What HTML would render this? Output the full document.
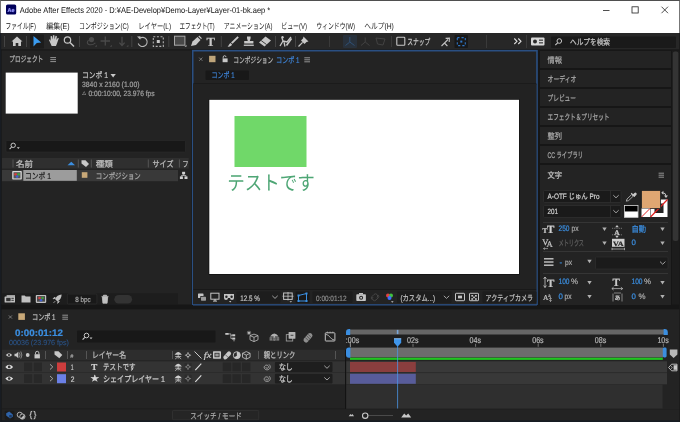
<!DOCTYPE html>
<html lang="ja"><head><meta charset="utf-8"><title>Adobe After Effects 2020</title>
<style>
html,body{margin:0;padding:0;background:#161616;overflow:hidden}
svg{display:block;will-change:transform;font-family:"Liberation Sans", "Noto Sans CJK JP", sans-serif;}
text{white-space:pre}
</style></head><body>
<svg width="680" height="422" viewBox="0 0 680 422" text-rendering="geometricPrecision">
<rect x="0" y="0" width="680" height="422" fill="#161616" />
<rect x="0" y="0" width="680" height="33" fill="#ffffff" />
<rect x="0" y="0" width="680" height="0.9" fill="#3c3c3c" />
<rect x="0" y="0" width="0.9" height="33" fill="#666" />
<rect x="679.2" y="0" width="0.8" height="33" fill="#555" />
<rect x="6" y="4.5" width="10.2" height="10" fill="#00005b" rx="1.6"/>
<text x="7.6" y="12.2" font-size="5.6" fill="#9a9aff" textLength="7" lengthAdjust="spacingAndGlyphs" font-weight="bold" stroke="#9a9aff" stroke-width="0.22" >Ae</text>
<text x="19.8" y="13" font-size="8.4" fill="#111" textLength="250.5" lengthAdjust="spacingAndGlyphs" >Adobe After Effects 2020 - D:¥AE-Develop¥Demo-Layer¥Layer-01-bk.aep *</text>
<line x1="603" y1="10.5" x2="609.5" y2="10.5" stroke="#222" stroke-width="0.8" />
<rect x="632" y="6.8" width="6.2" height="6.2" fill="none" stroke="#222" stroke-width="0.8"/>
<path d="M661.5 6.7 L668 13.2 M668 6.7 L661.5 13.2" fill="none" stroke="#222" stroke-width="0.8" />
<text x="5.5" y="29" font-size="8.2" fill="#151515" textLength="30.3" lengthAdjust="spacingAndGlyphs" >ファイル(F)</text>
<text x="46.2" y="29" font-size="8.2" fill="#151515" textLength="23.3" lengthAdjust="spacingAndGlyphs" >編集(E)</text>
<text x="79" y="29" font-size="8.2" fill="#151515" textLength="49.8" lengthAdjust="spacingAndGlyphs" >コンポジション(C)</text>
<text x="138.2" y="29" font-size="8.2" fill="#151515" textLength="32.8" lengthAdjust="spacingAndGlyphs" >レイヤー(L)</text>
<text x="179.5" y="29" font-size="8.2" fill="#151515" textLength="35.0" lengthAdjust="spacingAndGlyphs" >エフェクト(T)</text>
<text x="223.8" y="29" font-size="8.2" fill="#151515" textLength="48.7" lengthAdjust="spacingAndGlyphs" >アニメーション(A)</text>
<text x="281.2" y="29" font-size="8.2" fill="#151515" textLength="25.8" lengthAdjust="spacingAndGlyphs" >ビュー(V)</text>
<text x="316.2" y="29" font-size="8.2" fill="#151515" textLength="38.8" lengthAdjust="spacingAndGlyphs" >ウィンドウ(W)</text>
<text x="364.2" y="29" font-size="8.2" fill="#151515" textLength="29.6" lengthAdjust="spacingAndGlyphs" >ヘルプ(H)</text>
<rect x="0" y="33" width="680" height="16.5" fill="#272727" />
<rect x="0" y="49.5" width="680" height="1" fill="#1a1a1a" />
<line x1="4.5" y1="36" x2="4.5" y2="47" stroke="#444" stroke-width="1" />
<path d="M11.5 41.5 L17 36.5 L22.5 41.5 L21 41.5 L21 46 L18.3 46 L18.3 43 L15.7 43 L15.7 46 L13 46 L13 41.5 Z" fill="#c8c8c8" />
<line x1="26.5" y1="36" x2="26.5" y2="47" stroke="#444" stroke-width="1" />
<rect x="30" y="34.5" width="14" height="14" fill="#1c1c1c" rx="1"/>
<path d="M33.5 36 L41.2 42.6 L36.8 43 L33.5 46.5 Z" fill="#3b9cf0" />
<g transform="translate(53.5,41.5) scale(1.08) translate(-53.7,-42.3)">
<path d="M49.5 41 L50.5 40.2 L51.2 42 L51 37.5 L52.2 37.3 L52.8 40.5 L53.2 36.5 L54.5 36.5 L54.7 40.5 L55.6 37 L56.8 37.3 L56.4 41 L57.8 38.8 L58.6 39.4 L57 44 L56 46.5 L52 46.5 Z" fill="#c8c8c8" />
</g>
<circle cx="67.5" cy="40" r="3.2" fill="none" stroke="#c8c8c8" stroke-width="1.2"/>
<line x1="70" y1="42.5" x2="74" y2="46.5" stroke="#c8c8c8" stroke-width="1.5" />
<line x1="79.5" y1="36" x2="79.5" y2="47" stroke="#444" stroke-width="1" />
<circle cx="91.5" cy="39.6" r="2.6" fill="#4a4a4a"/>
<path d="M88.6 40.2 a4.4 2.6 -20 1 0 6.8 2.6" fill="none" stroke="#4a4a4a" stroke-width="1.1" />
<path d="M96.8 46.8 h-2 l2 -2 Z" fill="#4a4a4a" />
<path d="M105.3 36.6 V45.4 M100.6 41 H110" fill="none" stroke="#4a4a4a" stroke-width="1.3" />
<path d="M111.8 46.8 h-2 l2 -2 Z" fill="#4a4a4a" />
<path d="M122 36.8 V44.6 M119.4 42.6 L122 45.6 L124.6 42.6" fill="none" stroke="#4a4a4a" stroke-width="1.3" />
<path d="M128.4 46.8 h-2 l2 -2 Z" fill="#4a4a4a" />
<line x1="131.8" y1="36" x2="131.8" y2="47" stroke="#444" stroke-width="1" />
<path d="M139.5 38.5 A4.6 4.6 0 1 1 138.2 43.5" fill="none" stroke="#b8b8b8" stroke-width="1.05" />
<path d="M137 36.4 L140.5 36.2 L140.3 39.8 Z" fill="#b8b8b8" />
<rect x="153.3" y="36.8" width="10" height="9.6" fill="none" stroke="#b0b0b0" stroke-width="1.1" stroke-dasharray="2 1.6"/>
<rect x="156.8" y="40" width="3" height="3" fill="#c8c8c8" />
<line x1="168.8" y1="36" x2="168.8" y2="47" stroke="#444" stroke-width="1" />
<rect x="174.5" y="36.2" width="10.4" height="9" fill="#484848" stroke="#a8a8a8" stroke-width="1"/>
<path d="M186.5 46.8 h-2 l2 -2 Z" fill="#b0b0b0" />
<path d="M191 46 L192.5 41.5 L197.5 37 L200.5 40 L196 45 Z" fill="#c8c8c8" />
<path d="M198.8 36 L201.5 38.7" fill="none" stroke="#c8c8c8" stroke-width="1.2" />
<text x="206.6" y="45.8" font-size="12.6" fill="#c8c8c8" font-weight="bold" stroke="#c8c8c8" stroke-width="0.22" font-family="Liberation Serif, serif">T</text>
<line x1="221.3" y1="36" x2="221.3" y2="47" stroke="#444" stroke-width="1" />
<path d="M237.5 36.2 L238.8 37.4 L232.5 43.8 L231 42.5 Z" fill="#c8c8c8" />
<path d="M227.5 46.5 C229 46 229 43.5 230.6 43 L232 44.4 C231.5 46 229.5 47 227.5 46.5 Z" fill="#c8c8c8" />
<path d="M247 36.5 h3.6 v1.8 l-0.8 2.8 h3.6 v2.4 h-9.2 v-2.4 h3.6 l-0.8 -2.8 Z" fill="#c8c8c8" />
<rect x="243.8" y="44.6" width="10" height="1.3" fill="#c8c8c8" />
<path d="M259 42.5 L265.5 36.5 L271 40.5 L264.5 46.5 Z" fill="#c8c8c8" />
<path d="M261.2 40.6 L266.6 44.6" fill="none" stroke="#2b2b2b" stroke-width="0.9" />
<line x1="275.5" y1="36" x2="275.5" y2="47" stroke="#444" stroke-width="1" />
<path d="M280 46 L283 41 L282 38 M283 41 L287 42 L291 37 M285 46.5 L284 42" fill="none" stroke="#c8c8c8" stroke-width="1.3" />
<circle cx="282.5" cy="37.3" r="1.2" fill="#c8c8c8"/>
<path d="M286.5 45.5 L291.5 38.5" fill="none" stroke="#c8c8c8" stroke-width="1.6" />
<line x1="295.5" y1="36" x2="295.5" y2="47" stroke="#444" stroke-width="1" />
<path d="M303.5 36.5 L308.5 41.5 L306.5 42 L304.5 44 L301 40.5 L303 38.5 Z" fill="#c8c8c8" />
<path d="M302.6 42.4 L298.5 46.5" fill="none" stroke="#c8c8c8" stroke-width="1.2" />
<line x1="329.5" y1="36" x2="329.5" y2="47" stroke="#3a3a3a" stroke-width="1" />
<rect x="343" y="35" width="14" height="13" fill="#28313c" rx="1"/>
<path d="M349.8 37 V42 L345.5 45.5 M349.8 42 L354.5 45.5" fill="none" stroke="#2f5074" stroke-width="1" />
<path d="M365.2 37.5 V42 L361 45.5 M365.2 42 L369.5 45.5" fill="none" stroke="#424242" stroke-width="1" />
<path d="M376 38 L385 39 L383 45 L377.5 44 Z" fill="none" stroke="#424242" stroke-width="1" />
<line x1="391.5" y1="36" x2="391.5" y2="47" stroke="#3a3a3a" stroke-width="1" />
<rect x="396.8" y="37.3" width="8" height="8" fill="none" stroke="#c8c8c8" stroke-width="1.1" rx="0.8"/>
<text x="407.3" y="45.1" font-size="8.6" fill="#c8c8c8" textLength="23" lengthAdjust="spacingAndGlyphs" stroke="#c8c8c8" stroke-width="0.22" >スナップ</text>
<path d="M441.5 46 L448 39.5 M445.6 38.4 L449.4 38.2 L449.2 42 M444.4 43 L447.4 46" fill="none" stroke="#c0c0c0" stroke-width="1.1" />
<rect x="454.5" y="35" width="13.5" height="13" fill="#181818" rx="1"/>
<rect x="457.3" y="37.6" width="8" height="8" fill="none" stroke="#2e74c4" stroke-width="1.1" stroke-dasharray="2.2 2"/>
<rect x="460.3" y="40.6" width="2" height="2" fill="#2e74c4" />
<line x1="486.5" y1="35" x2="486.5" y2="48" stroke="#3a3a3a" stroke-width="1" />
<path d="M514.3 38.5 L517 41.3 L514.3 44 M518.3 38.5 L521 41.3 L518.3 44" fill="none" stroke="#ddd" stroke-width="1.1" />
<line x1="526.5" y1="35" x2="526.5" y2="48" stroke="#3a3a3a" stroke-width="1" />
<rect x="531" y="37.5" width="13.5" height="8" fill="#d8d8d8" rx="1"/>
<circle cx="535" cy="41.5" r="2" fill="#2b2b2b"/>
<rect x="539" y="39.6" width="4" height="1.1" fill="#2b2b2b" />
<rect x="539" y="42.3" width="4" height="1.1" fill="#2b2b2b" />
<rect x="551" y="36.5" width="125" height="11.5" fill="#1a1a1a" rx="1"/>
<circle cx="559.3" cy="41" r="2.3" fill="none" stroke="#c8c8c8" stroke-width="1"/>
<line x1="557.6" y1="42.8" x2="555.3" y2="45.2" stroke="#c8c8c8" stroke-width="1.1" />
<text x="570" y="45.1" font-size="8.4" fill="#c4c4c4" textLength="40" lengthAdjust="spacingAndGlyphs" stroke="#c4c4c4" stroke-width="0.22" >ヘルプを検索</text>
<rect x="1.5" y="50.5" width="189.8" height="254" fill="#232323" />
<text x="9.3" y="62.0" font-size="8.2" fill="#b8b8b8" textLength="34" lengthAdjust="spacingAndGlyphs" stroke="#b8b8b8" stroke-width="0.22" >プロジェクト</text>
<line x1="50.3" y1="57.6" x2="56" y2="57.6" stroke="#b0b0b0" stroke-width="0.8" />
<line x1="50.3" y1="59.6" x2="56" y2="59.6" stroke="#b0b0b0" stroke-width="0.8" />
<line x1="50.3" y1="61.6" x2="56" y2="61.6" stroke="#b0b0b0" stroke-width="0.8" />
<rect x="5.7" y="72.6" width="72" height="41" fill="#ffffff" />
<text x="82" y="78.0" font-size="8.2" fill="#c8c8c8" textLength="26" lengthAdjust="spacingAndGlyphs" stroke="#c8c8c8" stroke-width="0.22" >コンポ 1</text>
<path d="M110.5 74 L115.8 74 L113.15 77.4 Z" fill="#c8c8c8" />
<text x="82" y="87.1" font-size="7.7" fill="#a0a0a0" textLength="57.5" lengthAdjust="spacingAndGlyphs" stroke="#a0a0a0" stroke-width="0.22" >3840 x 2160 (1.00)</text>
<text x="82.2" y="95.2" font-size="4.4" fill="#a0a0a0" textLength="3.8" lengthAdjust="spacingAndGlyphs" stroke="#a0a0a0" stroke-width="0.22" >△</text>
<text x="88.4" y="96.1" font-size="7.7" fill="#a0a0a0" textLength="66.2" lengthAdjust="spacingAndGlyphs" stroke="#a0a0a0" stroke-width="0.22" >0:00:10:00, 23.976 fps</text>
<rect x="6" y="140.5" width="179.5" height="11.5" fill="#181818" rx="1" stroke="#2c2c2c" stroke-width="0.6"/>
<circle cx="13.2" cy="145.3" r="2.2" fill="none" stroke="#c8c8c8" stroke-width="1"/>
<line x1="11.6" y1="147" x2="9.6" y2="149.2" stroke="#c8c8c8" stroke-width="1.1" />
<path d="M16.8 147.2 L19.8 147.2 L18.3 149 Z" fill="#c8c8c8" />
<rect x="2" y="158" width="186.8" height="10.6" fill="#2f2f2f" />
<line x1="13" y1="159.5" x2="13" y2="167.5" stroke="#555" stroke-width="1" />
<line x1="78.3" y1="159.5" x2="78.3" y2="167.5" stroke="#555" stroke-width="1" />
<line x1="91.3" y1="159.5" x2="91.3" y2="167.5" stroke="#555" stroke-width="1" />
<line x1="148.3" y1="159.5" x2="148.3" y2="167.5" stroke="#555" stroke-width="1" />
<line x1="179.4" y1="159.5" x2="179.4" y2="167.5" stroke="#555" stroke-width="1" />
<text x="16" y="167.1" font-size="8.4" fill="#c0c0c0" textLength="17" lengthAdjust="spacingAndGlyphs" stroke="#c0c0c0" stroke-width="0.22" >名前</text>
<path d="M67.5 165.3 L71.3 161.8 L75 165.3 Z" fill="#3b8ee0" />
<path d="M81.5 160.3 L85.5 160.3 L89 164 L86 167 L81.5 163.5 Z" fill="#c8c8c8" />
<text x="95.8" y="167.1" font-size="8.4" fill="#c0c0c0" textLength="17" lengthAdjust="spacingAndGlyphs" stroke="#c0c0c0" stroke-width="0.22" >種類</text>
<text x="152.5" y="167.1" font-size="8.4" fill="#c0c0c0" textLength="21" lengthAdjust="spacingAndGlyphs" stroke="#c0c0c0" stroke-width="0.22" >サイズ</text>
<text x="182.6" y="167.1" font-size="8.4" fill="#c0c0c0" textLength="6" lengthAdjust="spacingAndGlyphs" stroke="#c0c0c0" stroke-width="0.22" >フ</text>
<rect x="2" y="170" width="176" height="11.2" fill="#393939" />
<rect x="12.2" y="171" width="9.6" height="8.6" fill="#d8d8d8" rx="0.8"/>
<rect x="13.5" y="172.2" width="7" height="6.2" fill="#555" />
<circle cx="15.6" cy="174.3" r="1.4" fill="#d04040"/><circle cx="18.6" cy="174.3" r="1.4" fill="#40a040"/><circle cx="17.1" cy="176.6" r="1.4" fill="#4060d0"/>
<rect x="23.3" y="170" width="53.5" height="10.8" fill="#9c9c9c" />
<text x="25" y="178.7" font-size="8.4" fill="#202020" textLength="26" lengthAdjust="spacingAndGlyphs" stroke="#202020" stroke-width="0.22" >コンポ 1</text>
<rect x="81.8" y="172.2" width="5.6" height="5.6" fill="#c8a878" />
<text x="95.8" y="178.5" font-size="8.2" fill="#a8a8a8" textLength="45" lengthAdjust="spacingAndGlyphs" stroke="#a8a8a8" stroke-width="0.22" >コンポジション</text>
<g transform="translate(1.3,0.2)">
<rect x="180.8" y="171.6" width="3" height="2.6" fill="#d0d0d0" />
<rect x="178.6" y="176.2" width="3" height="2.6" fill="#d0d0d0" />
<rect x="183.2" y="176.2" width="3" height="2.6" fill="#d0d0d0" />
<path d="M182.3 174 V175.4 M180.1 176.3 V175.3 H184.7 V176.3" fill="none" stroke="#d0d0d0" stroke-width="0.7" />
</g>
<rect x="2" y="293.3" width="176" height="11" fill="#1d1d1d" />
<g transform="translate(0,1.4)">
<rect x="4.6" y="295" width="10.4" height="6.2" fill="#c0c0c0" rx="0.6"/>
<rect x="6.6" y="293.8" width="8.4" height="1.6" fill="#c0c0c0" />
<rect x="6.2" y="296.4" width="4.4" height="3.4" fill="#333" />
<rect x="11.4" y="296.4" width="2.4" height="1" fill="#333" />
<rect x="11.4" y="298.4" width="2.4" height="1" fill="#333" />
<path d="M21.5 294 h3.2 l1 1 h4.8 v6 h-9 Z" fill="#c0c0c0" />
<rect x="35.8" y="293.5" width="10.4" height="8" fill="#c0c0c0" rx="0.8"/>
<rect x="37" y="294.7" width="8" height="5.6" fill="#4a4a4a" />
<circle cx="39.5" cy="296.6" r="1.3" fill="#d04040"/><circle cx="42.5" cy="296.6" r="1.3" fill="#40a040"/><circle cx="41" cy="298.8" r="1.3" fill="#4060d0"/>
<path d="M61.6 293.2 C58.4 293.4 56.4 295 55 297.6 L57.4 300 C60 298.6 61.6 296.6 61.6 293.2 Z" fill="#c0c0c0" />
<path d="M55.2 297 L53 297.4 L54.8 295.6 Z M58 299.8 L57.6 302 L59.4 300.2 Z M55.4 299.6 L53.4 301.6" fill="#c0c0c0" stroke="#c0c0c0" stroke-width="0.7" />
<rect x="67.3" y="292.6" width="29.6" height="10" fill="#191919" rx="1" stroke="#2e2e2e" stroke-width="0.7"/>
<text x="75.3" y="300.8" font-size="7.4" fill="#a8a8a8" textLength="15.5" lengthAdjust="spacingAndGlyphs" stroke="#a8a8a8" stroke-width="0.22" >8 bpc</text>
<path d="M101.5 295 h7 M103.5 295 v-1.2 h3 v1.2 M102.3 295.6 l0.6 6.2 h4.2 l0.6 -6.2 Z" fill="#c0c0c0" stroke="#c0c0c0" stroke-width="0.8" />
<rect x="114.3" y="293.6" width="17.8" height="8.6" fill="#333333" rx="4.3"/>
</g>
<rect x="192.7" y="50.7" width="344.3" height="254" fill="#232323" stroke="#2a4f82" stroke-width="1.6"/>
<path d="M199.2 57.6 L202.4 60.8 M202.4 57.6 L199.2 60.8" fill="none" stroke="#8a8a8a" stroke-width="0.8" />
<rect x="209.1" y="55.8" width="6.4" height="6.4" fill="#bfa57a" />
<rect x="222.6" y="58.4" width="5" height="3.8" fill="#c8c8c8" />
<path d="M223.2 58.4 v-1.3 a1.4 1.4 0 0 1 2.8 0" fill="none" stroke="#c8c8c8" stroke-width="0.9" />
<text x="233.3" y="62.7" font-size="8.2" fill="#b8b8b8" textLength="40" lengthAdjust="spacingAndGlyphs" stroke="#b8b8b8" stroke-width="0.22" >コンポジション</text>
<text x="276" y="62.7" font-size="8.2" fill="#3d80d2" textLength="23.5" lengthAdjust="spacingAndGlyphs" stroke="#3d80d2" stroke-width="0.22" >コンポ 1</text>
<line x1="304.3" y1="57.8" x2="310" y2="57.8" stroke="#b0b0b0" stroke-width="0.8" />
<line x1="304.3" y1="59.8" x2="310" y2="59.8" stroke="#b0b0b0" stroke-width="0.8" />
<line x1="304.3" y1="61.8" x2="310" y2="61.8" stroke="#b0b0b0" stroke-width="0.8" />
<rect x="205.5" y="70.5" width="43.5" height="9.6" fill="#181818" rx="1"/>
<text x="211.6" y="78.1" font-size="8.2" fill="#3d80d2" textLength="23" lengthAdjust="spacingAndGlyphs" stroke="#3d80d2" stroke-width="0.22" >コンポ 1</text>
<rect x="193" y="83.5" width="343.5" height="1" fill="#141414" />
<rect x="193" y="84" width="343.5" height="205" fill="#222222" />
<rect x="208.6" y="99.2" width="311" height="175.5" fill="#111111" />
<rect x="209.3" y="99.8" width="309.7" height="174.2" fill="#ffffff" />
<rect x="234.5" y="116" width="72" height="51" fill="#70d869" />
<text x="227.3" y="190.3" font-size="20" fill="#4ea675" textLength="87.5" lengthAdjust="spacingAndGlyphs" font-weight="400" >テストです</text>
<rect x="193" y="289" width="343.5" height="0.8" fill="#141414" />
<rect x="193" y="289.8" width="343.5" height="14.5" fill="#232323" />
<rect x="198" y="293.5" width="5.5" height="4.5" fill="#c4c4c4" rx="0.6"/>
<rect x="200.3" y="296" width="6" height="4.8" fill="#232323" rx="0.6"/>
<rect x="201" y="296.7" width="5" height="4" fill="#9a9a9a" rx="0.6"/>
<rect x="210.8" y="293.2" width="8.2" height="6" fill="none" stroke="#c4c4c4" stroke-width="1"/>
<rect x="213" y="300.6" width="4" height="1" fill="#c4c4c4" />
<rect x="214.4" y="299" width="1.2" height="2" fill="#c4c4c4" />
<path d="M224 294 h10 v4 a2 2 0 0 1 -4 0 h-2 a2 2 0 0 1 -4 0 Z" fill="#c4c4c4" />
<circle cx="226.4" cy="296.8" r="1.2" fill="#232323"/><circle cx="231.6" cy="296.8" r="1.2" fill="#232323"/>
<path d="M229 301 h2.4 l-1.2 1.4 Z" fill="#c4c4c4" />
<rect x="236.5" y="291.5" width="44" height="11.5" fill="#1d1d1d" rx="1"/>
<text x="240.3" y="300.7" font-size="7.9" fill="#c0c0c0" textLength="19.5" lengthAdjust="spacingAndGlyphs" stroke="#c0c0c0" stroke-width="0.22" >12.5 %</text>
<path d="M272.3 295.8 L275 298.4 L277.7 295.8" fill="none" stroke="#b0b0b0" stroke-width="0.9" />
<rect x="283.6" y="293" width="8.6" height="6.4" fill="none" stroke="#c4c4c4" stroke-width="1"/>
<path d="M288 292 v8.4 M282.5 296.2 h11" fill="none" stroke="#c4c4c4" stroke-width="0.8" />
<path d="M289.5 301.2 h2.6 l-1.3 1.4 Z" fill="#c4c4c4" />
<rect x="295.5" y="291.5" width="14" height="11.5" fill="#181818" rx="1"/>
<path d="M298.5 301 V295.5 L306.5 293.5 V301 Z" fill="none" stroke="#3b8ee0" stroke-width="1" />
<rect x="297.5" y="300" width="2" height="2" fill="#3b8ee0" />
<rect x="305.5" y="300" width="2" height="2" fill="#3b8ee0" />
<rect x="305.5" y="292.5" width="2" height="2" fill="#3b8ee0" />
<rect x="297.5" y="294.5" width="2" height="2" fill="#3b8ee0" />
<rect x="312.5" y="291.5" width="40" height="11.5" fill="#1d1d1d" rx="1"/>
<text x="316" y="300.7" font-size="7.7" fill="#8a8a8a" textLength="30.5" lengthAdjust="spacingAndGlyphs" stroke="#8a8a8a" stroke-width="0.22" >0:00:01:12</text>
<rect x="356.3" y="294.3" width="9.6" height="6.8" fill="#c4c4c4" rx="0.8"/>
<rect x="359" y="293" width="4" height="1.6" fill="#c4c4c4" />
<circle cx="361.1" cy="297.8" r="2" fill="#232323"/><circle cx="361.1" cy="297.8" r="1" fill="#c4c4c4"/>
<path d="M372 299.5 a2 2 0 0 1 0 -3 l2 -2 a2 2 0 0 1 3 3 M378 295 a2 2 0 0 1 0 3 l-2 2 a2 2 0 0 1 -3 -3" fill="none" stroke="#444" stroke-width="1" />
<circle cx="388" cy="295.4" r="2" fill="#e04040"/><circle cx="391" cy="295.4" r="2" fill="#40c040"/><circle cx="389.5" cy="298" r="2" fill="#4070ff"/>
<path d="M391 301.3 h2.6 l-1.3 1.4 Z" fill="#c4c4c4" />
<rect x="397" y="291.5" width="54.5" height="11.5" fill="#1d1d1d" rx="1"/>
<text x="400.5" y="300.7" font-size="8.2" fill="#c0c0c0" textLength="34.5" lengthAdjust="spacingAndGlyphs" stroke="#c0c0c0" stroke-width="0.22" >(カスタム...)</text>
<path d="M443.8 295.8 L446.5 298.4 L449.2 295.8" fill="none" stroke="#b0b0b0" stroke-width="0.9" />
<rect x="455.5" y="293.3" width="9" height="7.4" fill="none" stroke="#c4c4c4" stroke-width="1" rx="0.6"/>
<rect x="458" y="295.6" width="4" height="2.8" fill="#c4c4c4" />
<rect x="469.5" y="293.3" width="9" height="7.4" fill="none" stroke="#c4c4c4" stroke-width="1" rx="0.6"/>
<rect x="471.3" y="295" width="1.8" height="1.6" fill="#c4c4c4" />
<rect x="475" y="295" width="1.8" height="1.6" fill="#c4c4c4" />
<rect x="473.1" y="296.6" width="1.8" height="1.6" fill="#c4c4c4" />
<rect x="471.3" y="298.2" width="1.8" height="1.6" fill="#c4c4c4" />
<rect x="475" y="298.2" width="1.8" height="1.6" fill="#c4c4c4" />
<rect x="482.5" y="291.5" width="54" height="11.5" fill="#1d1d1d" rx="1"/>
<text x="485.5" y="300.7" font-size="8.2" fill="#c0c0c0" textLength="47.5" lengthAdjust="spacingAndGlyphs" stroke="#c0c0c0" stroke-width="0.22" >アクティブカメラ</text>
<rect x="538" y="50.5" width="142" height="254" fill="#161616" />
<rect x="540" y="51" width="131" height="17" fill="#232323" />
<text x="547.5" y="63.1" font-size="8.2" fill="#a8a8a8" textLength="14.5" lengthAdjust="spacingAndGlyphs" stroke="#a8a8a8" stroke-width="0.22" >情報</text>
<rect x="540" y="70" width="131" height="17" fill="#232323" />
<text x="547.5" y="82.1" font-size="8.2" fill="#a8a8a8" textLength="29" lengthAdjust="spacingAndGlyphs" stroke="#a8a8a8" stroke-width="0.22" >オーディオ</text>
<rect x="540" y="89" width="131" height="17" fill="#232323" />
<text x="547.5" y="101.1" font-size="8.2" fill="#a8a8a8" textLength="28.5" lengthAdjust="spacingAndGlyphs" stroke="#a8a8a8" stroke-width="0.22" >プレビュー</text>
<rect x="540" y="108" width="131" height="17" fill="#232323" />
<text x="547.5" y="120.1" font-size="8.2" fill="#a8a8a8" textLength="62" lengthAdjust="spacingAndGlyphs" stroke="#a8a8a8" stroke-width="0.22" >エフェクト＆プリセット</text>
<rect x="540" y="127" width="131" height="17" fill="#232323" />
<text x="547.5" y="139.1" font-size="8.2" fill="#a8a8a8" textLength="14.5" lengthAdjust="spacingAndGlyphs" stroke="#a8a8a8" stroke-width="0.22" >整列</text>
<rect x="540" y="146" width="131" height="17" fill="#232323" />
<text x="547.5" y="158.1" font-size="8.2" fill="#a8a8a8" textLength="35.5" lengthAdjust="spacingAndGlyphs" stroke="#a8a8a8" stroke-width="0.22" >CC ライブラリ</text>
<rect x="540" y="165" width="131" height="140" fill="#232323" />
<text x="547.5" y="178.1" font-size="8.2" fill="#c0c0c0" textLength="14.5" lengthAdjust="spacingAndGlyphs" stroke="#c0c0c0" stroke-width="0.22" >文字</text>
<line x1="658.6" y1="173.2" x2="664" y2="173.2" stroke="#b0b0b0" stroke-width="0.8" />
<line x1="658.6" y1="175.2" x2="664" y2="175.2" stroke="#b0b0b0" stroke-width="0.8" />
<line x1="658.6" y1="177.2" x2="664" y2="177.2" stroke="#b0b0b0" stroke-width="0.8" />
<rect x="672" y="50.5" width="8" height="254" fill="#1c1c1c" />
<rect x="672.8" y="51.5" width="5.6" height="189.5" fill="#343434" rx="2"/>
<rect x="543.5" y="190.5" width="77.5" height="12" fill="#1a1a1a" stroke="#2f2f2f" stroke-width="0.8" rx="1"/>
<line x1="610.5" y1="190.5" x2="610.5" y2="202.5" stroke="#303030" stroke-width="0.8" />
<text x="547.5" y="198.7" font-size="7.9" fill="#d0d0d0" textLength="52" lengthAdjust="spacingAndGlyphs" stroke="#d0d0d0" stroke-width="0.22" >A-OTF じゅん Pro</text>
<path d="M613.3 195.2 L616 197.8 L618.7 195.2" fill="none" stroke="#b0b0b0" stroke-width="0.9" />
<rect x="543.5" y="205.5" width="77.5" height="12" fill="#1a1a1a" stroke="#2f2f2f" stroke-width="0.8" rx="1"/>
<line x1="610.5" y1="205.5" x2="610.5" y2="217.5" stroke="#303030" stroke-width="0.8" />
<text x="547.5" y="213.8" font-size="7.7" fill="#d0d0d0" textLength="10.5" lengthAdjust="spacingAndGlyphs" stroke="#d0d0d0" stroke-width="0.22" >201</text>
<path d="M613.3 210.2 L616 212.8 L618.7 210.2" fill="none" stroke="#b0b0b0" stroke-width="0.9" />
<path d="M626.3 201.2 L627 199 L631.6 194.6 L633.2 196.2 L628.6 200.6 Z" fill="none" stroke="#c0c0c0" stroke-width="0.8" />
<path d="M631.2 193.2 L634.6 196.6" fill="none" stroke="#c8c8c8" stroke-width="1.2" />
<path d="M632.6 194.8 L634.4 193 a1.3 1.3 0 0 1 1.9 1.9 L634.5 196.7 Z" fill="#c8c8c8" />
<rect x="650.5" y="199.5" width="17" height="17.5" fill="#ffffff" />
<rect x="654.5" y="203.5" width="9" height="9.5" fill="#232323" />
<path d="M650.5 217 L667.5 199.5" fill="none" stroke="#e02020" stroke-width="1.2" />
<rect x="641.5" y="190.5" width="19" height="18" fill="#dfa672" stroke="#232323" stroke-width="0.8"/>
<path d="M662.6 192.8 a3.4 3.4 0 0 1 3.4 3.4" fill="none" stroke="#c8c8c8" stroke-width="1" />
<path d="M663.4 190.8 L661.2 192.8 L663.4 194.8 Z M664 195.6 L668 195.6 L666 198 Z" fill="#c8c8c8" />
<rect x="624.5" y="205.5" width="13.5" height="6" fill="#000000" />
<rect x="624.5" y="211.5" width="13.5" height="5.8" fill="#ffffff" />
<rect x="624.5" y="205.5" width="13.5" height="11.8" fill="none" stroke="#d8d8d8" stroke-width="0.8"/>
<rect x="641.5" y="208.5" width="8.5" height="8.5" fill="#ffffff" />
<path d="M641.5 217 L650 208.5" fill="none" stroke="#e02020" stroke-width="1" />
<line x1="543" y1="222.5" x2="668" y2="222.5" stroke="#3a3a3a" stroke-width="0.8" />
<line x1="543" y1="251.5" x2="668" y2="251.5" stroke="#3a3a3a" stroke-width="0.8" />
<line x1="543" y1="273.5" x2="668" y2="273.5" stroke="#3a3a3a" stroke-width="0.8" />
<text x="542.6" y="233.4" font-size="7.4" fill="#d0d0d0" font-weight="bold" stroke="#d0d0d0" stroke-width="0.22" font-family="Liberation Serif, serif">T</text>
<text x="547" y="233.4" font-size="11" fill="#d0d0d0" font-weight="bold" stroke="#d0d0d0" stroke-width="0.22" font-family="Liberation Serif, serif">T</text>
<text x="558.5" y="231.3" font-size="7.9" fill="#3b8ee0" textLength="11" lengthAdjust="spacingAndGlyphs" stroke="#3b8ee0" stroke-width="0.22" >250</text>
<text x="571.5" y="231.3" font-size="7.9" fill="#a8a8a8" textLength="7" lengthAdjust="spacingAndGlyphs" stroke="#a8a8a8" stroke-width="0.22" >px</text>
<path d="M602.3 227.4 L606.7 227.4 L604.5 230.9 Z" fill="#b0b0b0" />
<path d="M617 225 l-1.8 2.2 h3.6 Z M617 238 l-1.8 -2.2 h3.6 Z" fill="#c8c8c8" />
<path d="M612 228.3 h10 M612 234.8 h10" fill="none" stroke="#c8c8c8" stroke-width="0.5" stroke-dasharray="1 0.8"/>
<text x="614.2" y="234.6" font-size="7.4" fill="#c8c8c8" font-weight="bold" stroke="#c8c8c8" stroke-width="0.22" font-family="Liberation Serif, serif">A</text>
<text x="631.5" y="231.9" font-size="8.4" fill="#3b8ee0" textLength="14.5" lengthAdjust="spacingAndGlyphs" stroke="#3b8ee0" stroke-width="0.22" >自動</text>
<path d="M660.3 227.4 L664.7 227.4 L662.5 230.9 Z" fill="#b0b0b0" />
<text x="542.3" y="245.4" font-size="8.6" fill="#c8c8c8" stroke="#c8c8c8" stroke-width="0.22" font-family="Liberation Serif, serif">V</text>
<text x="546.6" y="246.6" font-size="8.6" fill="#c8c8c8" stroke="#c8c8c8" stroke-width="0.22" font-family="Liberation Serif, serif">A</text>
<path d="M543.5 248.6 h4.5 M543.5 248.6 l1.4 -1 M543.5 248.6 l1.4 1" fill="none" stroke="#c8c8c8" stroke-width="0.6" />
<text x="558.5" y="245.6" font-size="8.2" fill="#606060" textLength="25.5" lengthAdjust="spacingAndGlyphs" stroke="#606060" stroke-width="0.22" >メトリクス</text>
<path d="M602.3 241.6 L606.7 241.6 L604.5 245.1 Z" fill="#b0b0b0" />
<rect x="612" y="238.8" width="12.5" height="8" fill="#d0d0d0" />
<text x="613" y="245.8" font-size="6.6" fill="#222" textLength="10.5" lengthAdjust="spacingAndGlyphs" font-weight="bold" stroke="#222" stroke-width="0.22" font-family="Liberation Serif, serif">VA</text>
<path d="M612 249 h12.5 M612 247.8 v2.4 M624.5 247.8 v2.4" fill="none" stroke="#c8c8c8" stroke-width="0.7" />
<text x="631.5" y="244.7" font-size="7.9" fill="#3b8ee0" stroke="#3b8ee0" stroke-width="0.22" >0</text>
<path d="M660.3 241.6 L664.7 241.6 L662.5 245.1 Z" fill="#b0b0b0" />
<line x1="544" y1="258.8" x2="553.5" y2="258.8" stroke="#c8c8c8" stroke-width="1.4" />
<line x1="544" y1="262" x2="553.5" y2="262" stroke="#c8c8c8" stroke-width="1.4" />
<line x1="544" y1="265.2" x2="553.5" y2="265.2" stroke="#c8c8c8" stroke-width="1.4" />
<text x="559.5" y="265.1" font-size="7.9" fill="#3b8ee0" stroke="#3b8ee0" stroke-width="0.22" >-</text>
<text x="565" y="265.1" font-size="7.9" fill="#a8a8a8" textLength="7" lengthAdjust="spacingAndGlyphs" stroke="#a8a8a8" stroke-width="0.22" >px</text>
<path d="M587.3 259.7 L591.7 259.7 L589.5 263.2 Z" fill="#b0b0b0" />
<rect x="595.5" y="257" width="72.5" height="12" fill="#1b1b1b" stroke="#2c2c2c" stroke-width="0.8" rx="1"/>
<path d="M660 261.6 L662.7 264.2 L665.4 261.6" fill="none" stroke="#b0b0b0" stroke-width="0.9" />
<path d="M545 277 v10.5 M543.6 279 l1.4 -2 l1.4 2 M543.6 285.5 l1.4 2 l1.4 -2" fill="none" stroke="#c8c8c8" stroke-width="0.8" />
<text x="547" y="287" font-size="11" fill="#c8c8c8" font-weight="bold" stroke="#c8c8c8" stroke-width="0.22" font-family="Liberation Serif, serif">T</text>
<text x="558.5" y="284.3" font-size="7.9" fill="#3b8ee0" textLength="11" lengthAdjust="spacingAndGlyphs" stroke="#3b8ee0" stroke-width="0.22" >100</text>
<text x="571" y="284.3" font-size="7.9" fill="#a8a8a8" stroke="#a8a8a8" stroke-width="0.22" >%</text>
<path d="M587.3 280.9 L591.7 280.9 L589.5 284.4 Z" fill="#b0b0b0" />
<text x="612.5" y="285.5" font-size="11" fill="#c8c8c8" font-weight="bold" stroke="#c8c8c8" stroke-width="0.22" font-family="Liberation Serif, serif">T</text>
<path d="M612 288.6 h10.5 M613.6 287.2 l-1.8 1.4 l1.8 1.4 M620.9 287.2 l1.8 1.4 l-1.8 1.4" fill="none" stroke="#c8c8c8" stroke-width="0.7" />
<text x="631.5" y="284.3" font-size="7.9" fill="#3b8ee0" textLength="11" lengthAdjust="spacingAndGlyphs" stroke="#3b8ee0" stroke-width="0.22" >100</text>
<text x="644" y="284.3" font-size="7.9" fill="#a8a8a8" stroke="#a8a8a8" stroke-width="0.22" >%</text>
<path d="M660.3 280.9 L664.7 280.9 L662.5 284.4 Z" fill="#b0b0b0" />
<text x="543" y="299.5" font-size="7.5" fill="#c8c8c8" stroke="#c8c8c8" stroke-width="0.22" font-family="Liberation Serif, serif">A</text>
<text x="548.3" y="296.5" font-size="5" fill="#c8c8c8" stroke="#c8c8c8" stroke-width="0.22" font-family="Liberation Serif, serif">a</text>
<path d="M550.5 297.5 v4 M549.3 299 l1.2 -1.5 l1.2 1.5 M549.3 300 l1.2 1.5 l1.2 -1.5" fill="none" stroke="#c8c8c8" stroke-width="0.6" />
<text x="558.5" y="298.5" font-size="7.9" fill="#3b8ee0" stroke="#3b8ee0" stroke-width="0.22" >0</text>
<text x="564.5" y="298.5" font-size="7.9" fill="#a8a8a8" textLength="7" lengthAdjust="spacingAndGlyphs" stroke="#a8a8a8" stroke-width="0.22" >px</text>
<path d="M587.3 294.9 L591.7 294.9 L589.5 298.4 Z" fill="#b0b0b0" />
<text x="614.5" y="299.6" font-size="6" fill="#c8c8c8" stroke="#c8c8c8" stroke-width="0.22" >あ</text>
<path d="M613 293.5 v8 M622 293.5 v8 M614 293 h7" fill="none" stroke="#c8c8c8" stroke-width="0.6" />
<text x="631.5" y="298.5" font-size="7.9" fill="#3b8ee0" stroke="#3b8ee0" stroke-width="0.22" >0</text>
<text x="638.5" y="298.5" font-size="7.9" fill="#a8a8a8" stroke="#a8a8a8" stroke-width="0.22" >%</text>
<path d="M660.3 294.9 L664.7 294.9 L662.5 298.4 Z" fill="#b0b0b0" />
<rect x="0" y="305" width="680" height="5" fill="#161616" />
<rect x="193" y="304.5" width="344" height="1" fill="#2a4f82" />
<rect x="1.5" y="309.3" width="678.5" height="112.7" fill="#232323" />
<path d="M8.8 315.4 L12 318.6 M12 315.4 L8.8 318.6" fill="none" stroke="#8a8a8a" stroke-width="0.8" />
<rect x="18.3" y="313.3" width="6.6" height="6.6" fill="#c8a878" />
<text x="32" y="320.1" font-size="8.2" fill="#c0c0c0" textLength="23.5" lengthAdjust="spacingAndGlyphs" stroke="#c0c0c0" stroke-width="0.22" >コンポ 1</text>
<line x1="62.3" y1="315.2" x2="68" y2="315.2" stroke="#b0b0b0" stroke-width="0.8" />
<line x1="62.3" y1="317.2" x2="68" y2="317.2" stroke="#b0b0b0" stroke-width="0.8" />
<line x1="62.3" y1="319.2" x2="68" y2="319.2" stroke="#b0b0b0" stroke-width="0.8" />
<text x="15" y="335.6" font-size="9.4" fill="#3b8ee0" textLength="48" lengthAdjust="spacingAndGlyphs" font-weight="bold" stroke="#3b8ee0" stroke-width="0.22" >0:00:01:12</text>
<text x="9" y="345.4" font-size="7.4" fill="#2a5388" textLength="60" lengthAdjust="spacingAndGlyphs" stroke="#2a5388" stroke-width="0.1" >00036 (23.976 fps)</text>
<rect x="77" y="330.6" width="138.5" height="11.8" fill="#181818" rx="1"/>
<circle cx="86.5" cy="335.5" r="2.3" fill="none" stroke="#c8c8c8" stroke-width="1"/>
<line x1="84.8" y1="337.3" x2="82.6" y2="339.7" stroke="#c8c8c8" stroke-width="1.1" />
<path d="M89.5 337.5 L92.5 337.5 L91 339.3 Z" fill="#c8c8c8" />
<rect x="225.3" y="333" width="3.4" height="1.8" fill="#c8c8c8" />
<rect x="232.2" y="334.3" width="3" height="2" fill="#c8c8c8" />
<rect x="232.2" y="337.6" width="3" height="2" fill="#c8c8c8" />
<path d="M228.7 333.9 h2.2 v4.7 h1.3 M230.9 335.3 h1.3" fill="none" stroke="#c8c8c8" stroke-width="0.7" />
<path d="M233 340.4 h2 l-1 1.2 Z" fill="#c8c8c8" />
<path d="M250 335.6 l4 -1.5 l4 1.5 v4.2 l-4 1.8 l-4 -1.8 Z M250 335.6 l4 1.7 l4 -1.7 M254 337.3 v4.3" fill="none" stroke="#c0c0c0" stroke-width="0.8" />
<path d="M249 330.8 v4.2 M246.9 332.9 h4.2 M247.6 331.5 l2.8 2.8 M250.4 331.5 l-2.8 2.8" fill="none" stroke="#c8c8c8" stroke-width="0.7" />
<path d="M270 336.4 q4.3 -6 8.6 0 Z" fill="#b0b0b0" />
<rect x="273.6" y="334" width="1.4" height="6.4" fill="#b0b0b0" />
<rect x="269.6" y="337.3" width="9.6" height="3.2" fill="#8c8c8c" />
<path d="M269.6 338.9 h9.6 M272.6 337.3 v3.2 M276.2 337.3 v3.2" fill="none" stroke="#232323" stroke-width="0.5" />
<rect x="286.3" y="334.6" width="6.4" height="6.4" fill="none" stroke="#9a9a9a" stroke-width="0.9"/>
<rect x="288.6" y="332" width="6.8" height="6.8" fill="#b4b4b4" rx="0.5"/>
<rect x="290.6" y="334.8" width="2.8" height="0.9" fill="#333" />
<path d="M304 338.6 L308.4 333.6 a2.5 2.5 0 0 1 3.6 3.4 L307.6 342 a2.5 2.5 0 0 1 -3.6 -3.4 Z" fill="#8e8e8e" />
<path d="M305.2 337.4 l3.4 3.4 M306.6 335.8 l3.4 3.4 M308 334.2 l3.4 3.4" fill="none" stroke="#2a2a2a" stroke-width="0.55" />
<rect x="325.3" y="332.8" width="9.6" height="8.2" fill="none" stroke="#c4c4c4" stroke-width="1" rx="0.6"/>
<path d="M326 334.4 c3.5 0 4.5 5.6 8.4 5.6" fill="none" stroke="#c4c4c4" stroke-width="0.8" />
<path d="M327.4 331.6 v1.2 M330.1 331.6 v1.2 M332.8 331.6 v1.2" fill="none" stroke="#c4c4c4" stroke-width="0.7" />
<rect x="2" y="349.8" width="343" height="10.4" fill="#2d2d2d" />
<path d="M5.8 355 q3.2 -3.6 6.4 0 q-3.2 3.6 -6.4 0 Z" fill="#c8c8c8" />
<circle cx="9" cy="355" r="1.1" fill="#2d2d2d"/>
<path d="M14.5 353.8 h1.6 l2.2 -2 v6.4 l-2.2 -2 h-1.6 Z" fill="#c8c8c8" />
<path d="M19.3 352.5 q1.6 2.5 0 5 M20.8 351.5 q2.2 3.5 0 7" fill="none" stroke="#c8c8c8" stroke-width="0.6" />
<circle cx="27.7" cy="355" r="1.9" fill="#c8c8c8"/>
<rect x="34.5" y="354.2" width="5.4" height="4.2" fill="#c8c8c8" />
<path d="M35.5 354.2 v-1.2 a1.7 1.7 0 0 1 3.4 0 v1.2" fill="none" stroke="#c8c8c8" stroke-width="0.9" />
<line x1="45.5" y1="351" x2="45.5" y2="359" stroke="#555" stroke-width="1" />
<path d="M54.5 351.3 L58.5 351.3 L62.3 355 L59.3 358.2 L54.5 354.5 Z" fill="#c8c8c8" />
<line x1="67.5" y1="351" x2="67.5" y2="359" stroke="#555" stroke-width="1" />
<text x="70.2" y="357.5" font-size="5.4" fill="#a0a0a0" stroke="#a0a0a0" stroke-width="0.22" font-style="italic">#</text>
<line x1="86.5" y1="351" x2="86.5" y2="359" stroke="#555" stroke-width="1" />
<text x="92" y="358.3" font-size="8.4" fill="#c0c0c0" textLength="34" lengthAdjust="spacingAndGlyphs" stroke="#c0c0c0" stroke-width="0.22" >レイヤー名</text>
<line x1="172.5" y1="351" x2="172.5" y2="359" stroke="#555" stroke-width="1" />
<path d="M174.5 354.8 q3.7 -5.4 7.4 0 Z" fill="#c8c8c8" />
<path d="M178.2 352.2 v6.4 M175.2 356.5 h6 M177.79999999999998 356.8 l-2.6 2.2 M178.6 356.8 l2.6 2.2" fill="none" stroke="#c8c8c8" stroke-width="0.75" />
<circle cx="188" cy="355.2" r="1.5" fill="none" stroke="#c8c8c8" stroke-width="0.8"/>
<path d="M188 352.09999999999997 v1.5 M188 356.8 v1.5 M184.9 355.2 h1.5 M189.6 355.2 h1.5" fill="none" stroke="#c8c8c8" stroke-width="0.8" />
<path d="M194.5 351.5 L201.5 358.5" fill="none" stroke="#c8c8c8" stroke-width="1" />
<text x="203.8" y="358.2" font-size="8.8" fill="#c8c8c8" textLength="7.6" lengthAdjust="spacingAndGlyphs" stroke="#c8c8c8" stroke-width="0.22" font-style="italic" font-family="Liberation Serif, serif">fx</text>
<rect x="213" y="351.3" width="8" height="7.4" fill="#c8c8c8" rx="0.6"/>
<rect x="214.5" y="352.8" width="5" height="4.4" fill="#2d2d2d" />
<rect x="215.3" y="353.6" width="3.4" height="2.8" fill="#999" />
<path d="M223.5 356.5 L227.5 352 a2 2 0 0 1 3 3 L226.5 359 a2 2 0 0 1 -3 -2.5 Z" fill="#c8c8c8" />
<path d="M225.5 354.8 l2.6 2.6" fill="none" stroke="#2d2d2d" stroke-width="0.6" />
<circle cx="236.8" cy="355.2" r="3.5" fill="none" stroke="#c8c8c8" stroke-width="0.9"/>
<path d="M236.8 351.7 a3.5 3.5 0 0 1 0 7 Z M234 357.5 a3.5 3.5 0 0 0 2.8 1.2 v-3 Z" fill="#c8c8c8" />
<path d="M242.5 353.3 l3.8 -1.7 l3.8 1.7 v4 l-3.8 1.9 l-3.8 -1.9 Z M242.5 353.3 l3.8 1.8 l3.8 -1.8 M246.3 355.1 v4" fill="none" stroke="#c8c8c8" stroke-width="0.8" />
<line x1="258.5" y1="351" x2="258.5" y2="359" stroke="#555" stroke-width="1" />
<text x="263.8" y="358.3" font-size="8.4" fill="#c0c0c0" textLength="31.5" lengthAdjust="spacingAndGlyphs" stroke="#c0c0c0" stroke-width="0.22" >親とリンク</text>
<line x1="335.5" y1="351" x2="335.5" y2="359" stroke="#555" stroke-width="1" />
<rect x="2" y="361.3" width="343" height="11.3" fill="#333333" />
<path d="M5.3 366.90000000000003 q3.9 -4.4 7.8 0 q-3.9 4.4 -7.8 0 Z" fill="#e0e0e0" />
<circle cx="9.2" cy="366.90000000000003" r="1.4" fill="#333"/>
<rect x="24" y="362.5" width="8.2" height="8.8" fill="#282828" />
<rect x="33.8" y="362.5" width="8.2" height="8.8" fill="#282828" />
<path d="M50 364.3 L52.8 366.90000000000003 L50 369.50000000000006" fill="none" stroke="#b0b0b0" stroke-width="0.9" />
<rect x="57" y="362.5" width="9" height="9" fill="#cc3d3d" />
<text x="70.8" y="370.0" font-size="7.9" fill="#c8c8c8" textLength="2.8" lengthAdjust="spacingAndGlyphs" stroke="#c8c8c8" stroke-width="0.22" >1</text>
<text x="91.2" y="370.3" font-size="9" fill="#d0d0d0" font-weight="bold" stroke="#d0d0d0" stroke-width="0.22" font-family="Liberation Serif, serif">T</text>
<text x="103" y="370.1" font-size="8.4" fill="#d0d0d0" textLength="32.5" lengthAdjust="spacingAndGlyphs" stroke="#d0d0d0" stroke-width="0.22" >テストです</text>
<path d="M174.5 366.50000000000006 q3.7 -5.4 7.4 0 Z" fill="#d0d0d0" />
<path d="M178.2 363.90000000000003 v6.4 M175.2 368.20000000000005 h6 M177.79999999999998 368.50000000000006 l-2.6 2.2 M178.6 368.50000000000006 l2.6 2.2" fill="none" stroke="#d0d0d0" stroke-width="0.75" />
<rect x="184.6" y="363.1" width="7" height="7.6" fill="#2c2c2c" />
<circle cx="188" cy="366.90000000000003" r="1.5" fill="none" stroke="#8a8a8a" stroke-width="0.8"/>
<path d="M188 363.8 v1.5 M188 368.50000000000006 v1.5 M184.9 366.90000000000003 h1.5 M189.6 366.90000000000003 h1.5" fill="none" stroke="#8a8a8a" stroke-width="0.8" />
<path d="M195.3 370.1 L201.3 363.70000000000005" fill="none" stroke="#e0e0e0" stroke-width="1.1" />
<rect x="222.8" y="362.5" width="8.4" height="8.8" fill="#272727" />
<rect x="232.4" y="362.5" width="8.4" height="8.8" fill="#272727" />
<rect x="242" y="362.5" width="8.4" height="8.8" fill="#272727" />
<path d="M265.94 367.10 L265.90 367.34 L265.95 367.60 L266.09 367.85 L266.32 368.07 L266.64 368.22 L267.01 368.29 L267.41 368.25 L267.80 368.10 L268.14 367.84 L268.39 367.48 L268.53 367.06 L268.52 366.60 L268.35 366.14 L268.04 365.73 L267.58 365.40 L267.02 365.20 L266.40 365.15 L265.76 365.27 L265.18 365.56 L264.69 366.00 L264.35 366.57 L264.21 367.22 L264.28 367.90 L264.57 368.56 L265.08 369.12 L265.76 369.55 L266.57 369.78 L267.44 369.80 L268.30 369.59 L269.08 369.15 L269.71 368.52 L270.11 367.73 L270.25 366.86 L270.11 365.96 L269.67 365.12 L268.97 364.41" fill="none" stroke="#b8b8b8" stroke-width="0.8" />
<rect x="274.9" y="362.1" width="57.6" height="9.8" fill="#1e1e1e" rx="1"/>
<text x="278.9" y="370.1" font-size="8.4" fill="#d0d0d0" textLength="13.8" lengthAdjust="spacingAndGlyphs" stroke="#d0d0d0" stroke-width="0.22" >なし</text>
<path d="M324.3 365.70000000000005 L327 368.3 L329.7 365.70000000000005" fill="none" stroke="#b0b0b0" stroke-width="0.9" />
<rect x="2" y="373" width="343" height="11.3" fill="#333333" />
<path d="M5.3 378.6 q3.9 -4.4 7.8 0 q-3.9 4.4 -7.8 0 Z" fill="#e0e0e0" />
<circle cx="9.2" cy="378.6" r="1.4" fill="#333"/>
<rect x="24" y="374.2" width="8.2" height="8.8" fill="#282828" />
<rect x="33.8" y="374.2" width="8.2" height="8.8" fill="#282828" />
<path d="M50 376.0 L52.8 378.6 L50 381.20000000000005" fill="none" stroke="#b0b0b0" stroke-width="0.9" />
<rect x="57" y="374.2" width="9" height="9" fill="#6b80e6" />
<text x="70.8" y="381.7" font-size="7.9" fill="#c8c8c8" textLength="3.7" lengthAdjust="spacingAndGlyphs" stroke="#c8c8c8" stroke-width="0.22" >2</text>
<text x="90.6" y="381.4" font-size="7.6" fill="#d8d8d8" textLength="8.6" lengthAdjust="spacingAndGlyphs" stroke="#d8d8d8" stroke-width="0.22" >★</text>
<text x="103" y="381.8" font-size="8.4" fill="#d0d0d0" textLength="62" lengthAdjust="spacingAndGlyphs" stroke="#d0d0d0" stroke-width="0.22" >シェイプレイヤー 1</text>
<path d="M174.5 378.20000000000005 q3.7 -5.4 7.4 0 Z" fill="#d0d0d0" />
<path d="M178.2 375.6 v6.4 M175.2 379.90000000000003 h6 M177.79999999999998 380.20000000000005 l-2.6 2.2 M178.6 380.20000000000005 l2.6 2.2" fill="none" stroke="#d0d0d0" stroke-width="0.75" />
<rect x="184.6" y="374.8" width="7" height="7.6" fill="#2c2c2c" />
<circle cx="188" cy="378.6" r="1.5" fill="none" stroke="#8a8a8a" stroke-width="0.8"/>
<path d="M188 375.5 v1.5 M188 380.20000000000005 v1.5 M184.9 378.6 h1.5 M189.6 378.6 h1.5" fill="none" stroke="#8a8a8a" stroke-width="0.8" />
<path d="M195.3 381.8 L201.3 375.40000000000003" fill="none" stroke="#e0e0e0" stroke-width="1.1" />
<rect x="222.8" y="374.2" width="8.4" height="8.8" fill="#272727" />
<rect x="232.4" y="374.2" width="8.4" height="8.8" fill="#272727" />
<rect x="242" y="374.2" width="8.4" height="8.8" fill="#272727" />
<path d="M265.94 378.80 L265.90 379.04 L265.95 379.30 L266.09 379.55 L266.32 379.77 L266.64 379.92 L267.01 379.99 L267.41 379.95 L267.80 379.80 L268.14 379.54 L268.39 379.18 L268.53 378.76 L268.52 378.30 L268.35 377.84 L268.04 377.43 L267.58 377.10 L267.02 376.90 L266.40 376.85 L265.76 376.97 L265.18 377.26 L264.69 377.70 L264.35 378.27 L264.21 378.92 L264.28 379.60 L264.57 380.26 L265.08 380.82 L265.76 381.25 L266.57 381.48 L267.44 381.50 L268.30 381.29 L269.08 380.85 L269.71 380.22 L270.11 379.43 L270.25 378.56 L270.11 377.66 L269.67 376.82 L268.97 376.11" fill="none" stroke="#b8b8b8" stroke-width="0.8" />
<rect x="274.9" y="373.8" width="57.6" height="9.8" fill="#1e1e1e" rx="1"/>
<text x="278.9" y="381.8" font-size="8.4" fill="#d0d0d0" textLength="13.8" lengthAdjust="spacingAndGlyphs" stroke="#d0d0d0" stroke-width="0.22" >なし</text>
<path d="M324.3 377.40000000000003 L327 380.0 L329.7 377.40000000000003" fill="none" stroke="#b0b0b0" stroke-width="0.9" />
<rect x="2" y="408.7" width="678" height="0.8" fill="#161616" />
<rect x="2" y="409.3" width="678" height="12.7" fill="#232323" />
<rect x="4.8" y="410.8" width="9.6" height="9" fill="#1b1b1b" rx="1"/>
<path d="M6.2 413.2 l3 -1.6 l3.6 3 v2.2 l-2.8 1.6 l-3.8 -3 Z" fill="#2f63a8" />
<rect x="9.2" y="415" width="2.6" height="2.4" fill="#1f3a60" rx="0.5"/>
<circle cx="19.8" cy="414.8" r="2.6" fill="none" stroke="#c0c0c0" stroke-width="0.9"/><circle cx="22.4" cy="416.6" r="2.6" fill="#232323" stroke="#c0c0c0" stroke-width="0.9"/><path d="M20.6 418.4 a2.6 2.6 0 0 0 3.6 -3.6 Z" fill="#c0c0c0"/>
<path d="M32.2 411.4 q-1.4 0 -1.4 1.4 v1.2 q0 1 -1.2 1.2 q1.2 0.2 1.2 1.2 v1.2 q0 1.4 1.4 1.4 M33.6 411.4 q1.4 0 1.4 1.4 v1.2 q0 1 1.2 1.2 q-1.2 0.2 -1.2 1.2 v1.2 q0 1.4 -1.4 1.4" fill="none" stroke="#c0c0c0" stroke-width="1.1" />
<rect x="172.5" y="410.4" width="86.2" height="9.4" fill="#252525" rx="1" stroke="#363636" stroke-width="0.7"/>
<text x="190.3" y="418.6" font-size="8.2" fill="#a8a8a8" textLength="51.5" lengthAdjust="spacingAndGlyphs" stroke="#a8a8a8" stroke-width="0.22" >スイッチ / モード</text>
<rect x="346" y="328" width="334" height="81" fill="#232323" />
<rect x="345.2" y="349.8" width="0.9" height="59" fill="#111" />
<rect x="349.5" y="329.2" width="315" height="5.6" fill="#4a4a4a" rx="1"/>
<rect x="350" y="329.9" width="314" height="4.2" fill="#666666" />
<path d="M346 335 v-2.8 a3.2 3.2 0 0 1 3.2 -3.2 h1 v6 Z" fill="#3b8ee0" />
<path d="M667.8 335 v-2.8 a3.2 3.2 0 0 0 -3.2 -3.2 h-1 v6 Z" fill="#3b8ee0" />
<rect x="396.8" y="329.9" width="1.6" height="4.2" fill="#7aa6d8" />
<rect x="346" y="335" width="321.5" height="12.5" fill="#1e1e1e" />
<text x="345.4" y="342.9" font-size="8.4" fill="#999" stroke="#999" stroke-width="0.22" >:</text>
<line x1="350.4" y1="341.6" x2="350.4" y2="347.2" stroke="#b0b0b0" stroke-width="0.7" />
<line x1="350.4" y1="343.8" x2="350.4" y2="346.8" stroke="#8a8a8a" stroke-width="0.8" />
<text x="347.8" y="342.6" font-size="8.4" fill="#b4b4b4" textLength="11.5" lengthAdjust="spacingAndGlyphs" stroke="#b4b4b4" stroke-width="0.22" >00s</text>
<line x1="413.0" y1="343.8" x2="413.0" y2="346.8" stroke="#8a8a8a" stroke-width="0.8" />
<text x="407.0" y="342.6" font-size="8.4" fill="#b4b4b4" textLength="11.5" lengthAdjust="spacingAndGlyphs" stroke="#b4b4b4" stroke-width="0.22" >02s</text>
<line x1="475.59999999999997" y1="343.8" x2="475.59999999999997" y2="346.8" stroke="#8a8a8a" stroke-width="0.8" />
<text x="469.59999999999997" y="342.6" font-size="8.4" fill="#b4b4b4" textLength="11.5" lengthAdjust="spacingAndGlyphs" stroke="#b4b4b4" stroke-width="0.22" >04s</text>
<line x1="538.2" y1="343.8" x2="538.2" y2="346.8" stroke="#8a8a8a" stroke-width="0.8" />
<text x="532.2" y="342.6" font-size="8.4" fill="#b4b4b4" textLength="11.5" lengthAdjust="spacingAndGlyphs" stroke="#b4b4b4" stroke-width="0.22" >06s</text>
<line x1="600.8" y1="343.8" x2="600.8" y2="346.8" stroke="#8a8a8a" stroke-width="0.8" />
<text x="594.8" y="342.6" font-size="8.4" fill="#b4b4b4" textLength="11.5" lengthAdjust="spacingAndGlyphs" stroke="#b4b4b4" stroke-width="0.22" >08s</text>
<line x1="663.4" y1="343.8" x2="663.4" y2="346.8" stroke="#8a8a8a" stroke-width="0.8" />
<text x="657.4" y="342.6" font-size="8.4" fill="#b4b4b4" textLength="11.5" lengthAdjust="spacingAndGlyphs" stroke="#b4b4b4" stroke-width="0.22" >10s</text>
<rect x="350" y="347.6" width="313" height="9.8" fill="#6c6c6c" />
<path d="M350.4 347.6 v10.2 h-1.4 a3 3 0 0 1 -3 -3 v-4.2 a3 3 0 0 1 3 -3 Z" fill="#3b8ee0" />
<rect x="662.8" y="347.6" width="3.8" height="9.8" fill="#3b8ee0" rx="1.4"/>
<rect x="350" y="357.7" width="312.8" height="2.2" fill="#21c421" />
<rect x="346.3" y="361.3" width="320.7" height="11.3" fill="#393939" />
<rect x="346.3" y="373" width="320.7" height="11.3" fill="#383838" />
<rect x="346.3" y="384.5" width="316.3" height="24" fill="#2f2f2f" />
<rect x="350" y="361.9" width="65.8" height="10.1" fill="#8a3e3e" />
<rect x="350" y="373.7" width="65.8" height="10.1" fill="#585c9a" />
<rect x="346.3" y="372.6" width="320.7" height="0.5" fill="#2a2a2a" />
<path d="M669.8 349.6 h7.6 v5 l-3.8 3.4 l-3.8 -3.4 Z" fill="#b8b8b8" />
<path d="M668.6 367.5 l3 -3.3 h5.4 v6.6 h-5.4 Z" fill="none" stroke="#c8c8c8" stroke-width="0.9" />
<rect x="673.6" y="365.2" width="3.4" height="4.6" fill="#c8c8c8" />
<path d="M670.8 366 l1.6 1.5 l-1.6 1.5" fill="none" stroke="#c8c8c8" stroke-width="0.7" />
<line x1="397.6" y1="346" x2="397.6" y2="408.5" stroke="#4a96e6" stroke-width="0.8" />
<path d="M394 338.6 h7.2 v4.2 l-3.6 3.9 l-3.6 -3.9 Z" fill="#3f95ea" />
<rect x="394" y="338.4" width="7.2" height="0.8" fill="#9cc8f5" />
<path d="M348.7 416.3 l1.7 -2.2 l1 1 l1 -1 l1.7 2.2 Z" fill="#c0c0c0" />
<line x1="368" y1="415.5" x2="393" y2="415.5" stroke="#4a4a4a" stroke-width="1" />
<circle cx="365.2" cy="415.7" r="2.7" fill="#232323" stroke="#c8c8c8" stroke-width="1.1"/>
<path d="M401.2 417.6 l3 -4 l2 2 l2 -2 l3 4 Z" fill="#c8c8c8" />
<rect x="0" y="420.4" width="680" height="1.6" fill="#161b22" />
<rect x="0" y="33" width="1.2" height="389" fill="#181c22" />
<rect x="679.2" y="33" width="0.8" height="389" fill="#1a1a1a" />
</svg>
</body></html>
